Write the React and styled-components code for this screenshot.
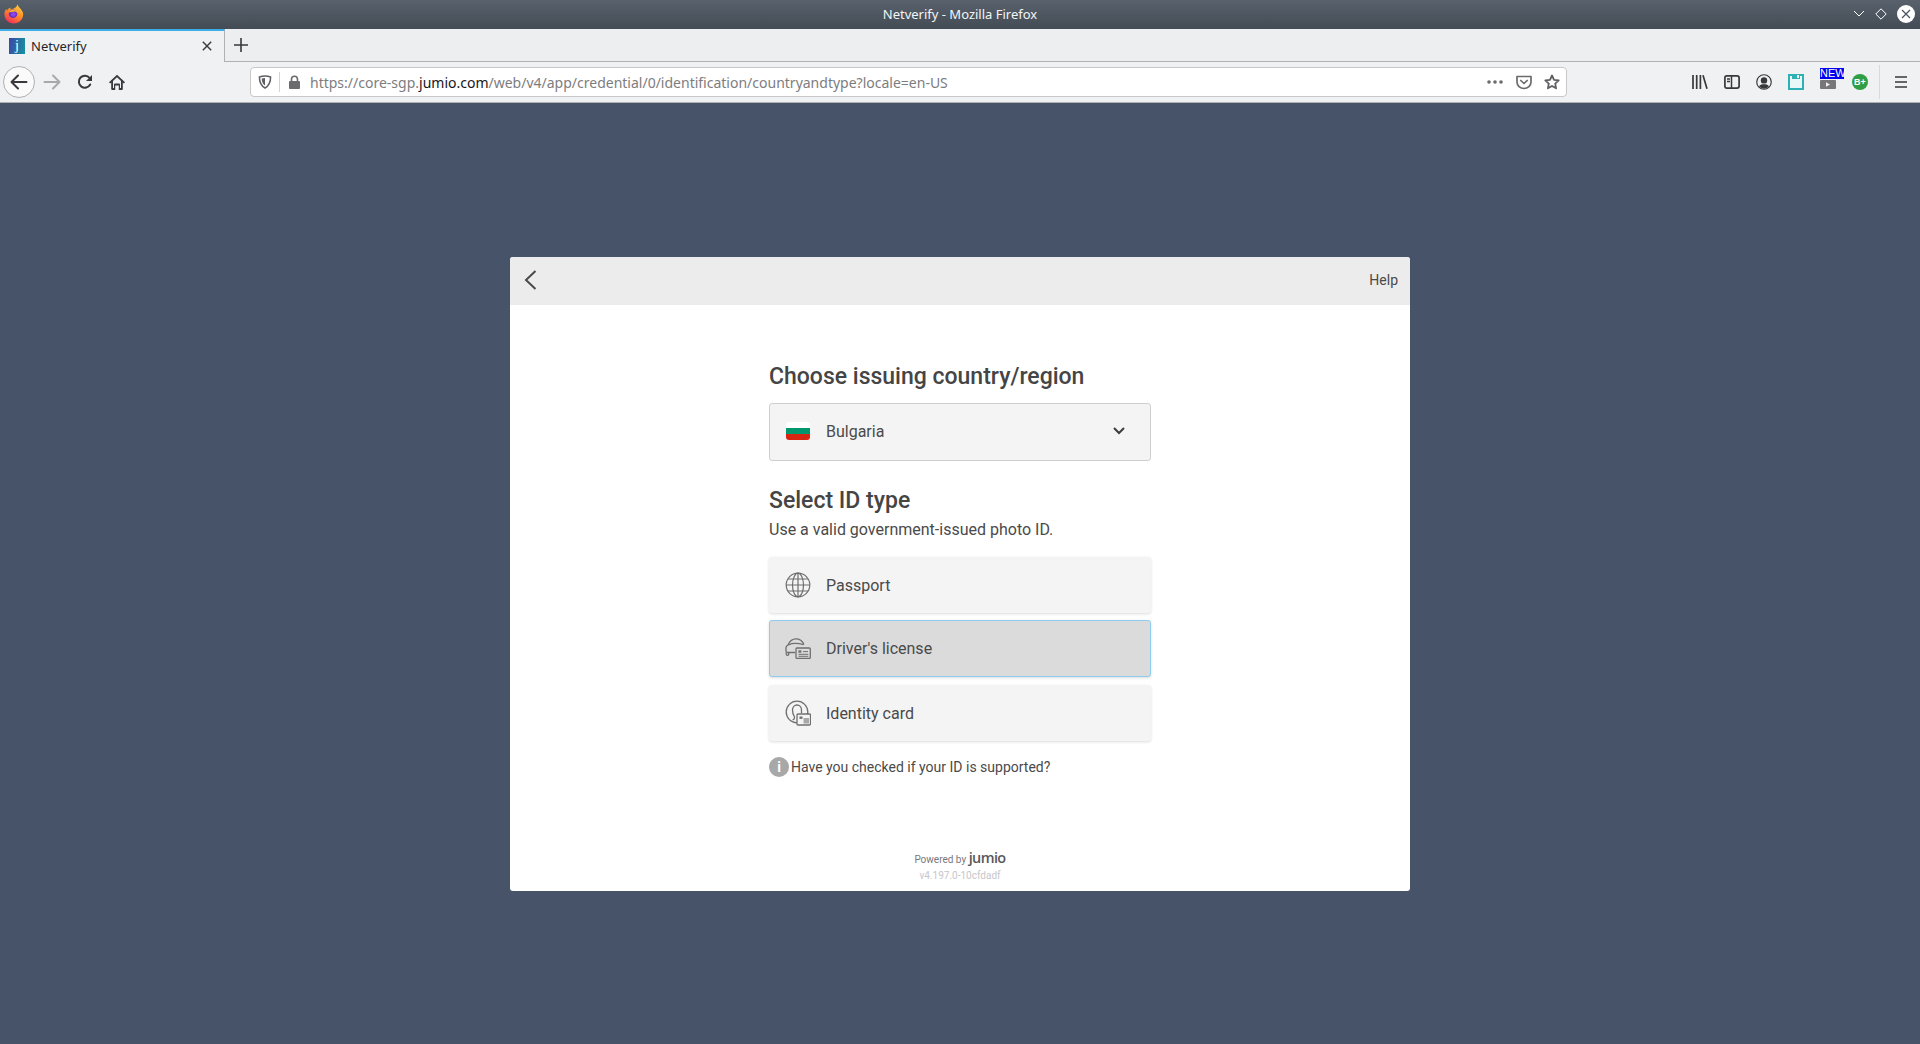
import React from "react";
import styled, { createGlobalStyle } from "styled-components";

const GlobalStyle = createGlobalStyle`
  html, body { margin: 0; padding: 0; height: 100%; }
  body { background: #475369; font-family: "Roboto", "Liberation Sans", sans-serif; overflow: hidden; }
`;

function FirefoxLogo() {
  return (
    <svg width="20" height="20" viewBox="0 0 20 20">
      <defs>
        <linearGradient id="ff" x1="0.8" y1="0" x2="0.25" y2="1">
          <stop offset="0" stopColor="#ffd43a" />
          <stop offset="0.5" stopColor="#ff8a26" />
          <stop offset="1" stopColor="#f5275f" />
        </linearGradient>
      </defs>
      <path d="M13.500 0c.2 2 1.500 3 3 4.800 1.600 2 2.700 3.600 2.700 5.400 0 5-4.200 9.300-9.400 9.300C4.700 19.500.4 15.500.4 10.200c0-2 .7-4 1.900-5.500 0 1 .3 1.600.8 2 .6-1.600 1.800-2.800 3.500-3.200-.4.800-.4 1.400-.1 1.800C9.500 5 13 3.500 13.500 0z" fill="url(#ff)" />
      <circle cx="9" cy="9.800" r="4.300" fill="#6a2fc4" />
      <path d="M4.800 8.500c.8-2 3-3.200 5.300-2.700 2 .4 3.300 1.800 3.500 3.400-1.200-1.300-2.800-1.800-4.300-1.500-1.600.2-3.100.2-4.500.8z" fill="#ffb62c" />
      <circle cx="9.300" cy="10.300" r="2.400" fill="#8c45e8" />
    </svg>
  );
}

function BackArrow() {
  return (
    <svg width="18" height="16" viewBox="0 0 18 16" fill="none" stroke="#38383d" strokeWidth="2" strokeLinecap="round" strokeLinejoin="round">
      <path d="M1.500 8h15M8 1.500 1.500 8 8 14.500" />
    </svg>
  );
}

function ForwardArrow() {
  return (
    <svg width="18" height="16" viewBox="0 0 18 16" fill="none" stroke="#a9a9ab" strokeWidth="2" strokeLinecap="round" strokeLinejoin="round">
      <path d="M16.500 8h-15M10 1.500 16.500 8 10 14.500" />
    </svg>
  );
}

function Reload() {
  return (
    <svg width="16" height="16" viewBox="0 0 16 16" fill="none">
      <path d="M13.200 10.500A6 6 0 1 1 12.600 4" stroke="#38383d" strokeWidth="2" strokeLinecap="round" />
      <path d="M15 1v6H9z" fill="#38383d" />
    </svg>
  );
}

function Home() {
  return (
    <svg width="16" height="16" viewBox="0 0 16 16">
      <path d="M8 .800 0 8.300l1.200 1.200 1-.9V15a1 1 0 0 0 1 1h3v-4.500h3.600V16h3a1 1 0 0 0 1-1V8.600l1 .9L16 8.300z" fill="#38383d" />
      <path d="M8 3.200 4 6.900V14h1V10.500a1 1 0 0 1 1-1h4a1 1 0 0 1 1 1V14h1V6.900z" fill="#f0f0f4" />
    </svg>
  );
}

function Shield() {
  return (
    <svg width="14" height="14" viewBox="0 0 14 14" fill="none">
      <path d="M7 1c2 0 4 .4 5.600 1 0 4.500-1 8.500-5.600 11C2.400 10.500 1.400 6.500 1.400 2 3 1.400 5 1 7 1z" stroke="#5f5f63" strokeWidth="1.500" />
      <path d="M7 3v7.500C4.600 9 3.800 6.600 3.700 3.500 4.800 3.200 6 3 7 3z" fill="#5f5f63" />
    </svg>
  );
}

function Lock() {
  return (
    <svg width="13" height="14" viewBox="0 0 13 14" fill="none">
      <path d="M3.500 6V4.200a3 3 0 0 1 6 0V6" stroke="#6b6b6e" strokeWidth="1.600" />
      <rect x="1" y="6" width="11" height="8" rx="1" fill="#6b6b6e" />
    </svg>
  );
}

function DotsIcon() {
  return (
    <svg width="16" height="4" viewBox="0 0 16 4" fill="#6b6b6e">
      <circle cx="2" cy="2" r="1.800" />
      <circle cx="8" cy="2" r="1.800" />
      <circle cx="14" cy="2" r="1.800" />
    </svg>
  );
}

function Pocket() {
  return (
    <svg width="16" height="15" viewBox="0 0 16 15" fill="none" stroke="#6b6b6e" strokeWidth="1.700">
      <path d="M1 1.500h14v5.500c0 3.600-3.200 6.500-7 6.500S1 10.600 1 7z" strokeLinejoin="round" />
      <path d="M4.800 5.500 8 8.500l3.200-3" strokeLinecap="round" strokeLinejoin="round" />
    </svg>
  );
}

function Star() {
  return (
    <svg width="16" height="16" viewBox="0 0 16 16" fill="none">
      <path d="m8 1.500 2 4.300 4.700.6-3.500 3.200.9 4.700L8 12l-4.100 2.300.9-4.700L1.300 6.400 6 5.800z" stroke="#5f5f63" strokeWidth="1.800" strokeLinejoin="round" />
    </svg>
  );
}

function Library() {
  return (
    <svg width="16" height="14" viewBox="0 0 16 14" fill="none" stroke="#38383d" strokeWidth="1.700">
      <path d="M1 0v14M4.700 0v14M8.400 0v14M11 .3l4 13.500" />
    </svg>
  );
}

function Sidebar() {
  return (
    <svg width="16" height="14" viewBox="0 0 16 14" fill="none">
      <rect x=".9" y=".9" width="14.200" height="12.200" rx="2" stroke="#38383d" strokeWidth="1.700" />
      <path d="M7.500 1v12" stroke="#38383d" strokeWidth="1.500" />
      <path d="M3 4h3M3 6.500h3" stroke="#38383d" strokeWidth="1.300" />
    </svg>
  );
}

function Account() {
  return (
    <svg width="16" height="16" viewBox="0 0 15 15" fill="none">
      <circle cx="7.500" cy="7.500" r="6.800" stroke="#38383d" strokeWidth="1.100" />
      <circle cx="7.500" cy="6" r="3" fill="#38383d" />
      <path d="M2.800 11.500C4 10 5.700 9.700 7.500 9.700s3.500.3 4.700 1.800A6 6 0 0 1 7.500 13.800a6 6 0 0 1-4.700-2.300z" fill="#38383d" />
    </svg>
  );
}

function Floppy() {
  return (
    <svg width="16" height="16" viewBox="0 0 16 16">
      <path d="M0 0h16v16H0z" fill="#2fb0b5" />
      <path d="M2 2h12v12H2z" fill="#e8f7f8" />
      <path d="M4 0h8v5H4z" fill="#2fb0b5" />
      <path d="M9 1h2v3H9z" fill="#e8f7f8" />
    </svg>
  );
}

function VideoExt() {
  return (
    <svg width="16" height="9" viewBox="0 0 16 9">
      <rect width="16" height="9" rx="1" fill="#77777a" />
      <path d="M6 2.200 10 4.500 6 6.800z" fill="#f0f0f4" />
    </svg>
  );
}

function MenuBars() {
  return (
    <svg width="12" height="12" viewBox="0 0 12 12" stroke="#38383d" strokeWidth="1.600">
      <path d="M0 1h12M0 6h12M0 11h12" />
    </svg>
  );
}

function GlobeIcon() {
  return (
    <svg width="26" height="26" viewBox="0 0 26 26" fill="none" stroke="#6f6f6f" strokeWidth="1.200">
      <circle cx="13" cy="13" r="11.800" />
      <ellipse cx="13" cy="13" rx="5.500" ry="11.800" />
      <path d="M13 1.200v23.600M1.200 13h23.600M3 7h20M3 19h20" />
    </svg>
  );
}

function CarIcon() {
  return (
    <svg width="26" height="21" viewBox="0 0 26 21" fill="none" stroke="#6f6f6f" strokeWidth="1.300">
      <path d="M10 14.500H2.600a1.600 1.600 0 0 1-1.600-1.600V9.800c0-1.300.8-2.400 2.100-3C4.600 3.300 7 .9 11 .9c3.800 0 6.300 2 8 5.600" />
      <path d="M3.400 6.800c3.400-1.500 10-1.500 15.200-.2" />
      <path d="M1.200 14.500v1.600a1.300 1.300 0 0 0 2.600 0v-1.600" />
      <rect x="11" y="10" width="14.300" height="10.400" rx="1" fill="#dbdbdb" />
      <rect x="13.400" y="12.300" width="3" height="2.400" fill="#6f6f6f" stroke="none" />
      <path d="M18 13.600h5M13.500 16.300h9.800M13.500 18.300h9.800" strokeWidth="1" />
    </svg>
  );
}

function PersonIcon() {
  return (
    <svg width="26" height="26" viewBox="0 0 26 26" fill="none" stroke="#6f6f6f" strokeWidth="1.300">
      <circle cx="12" cy="12" r="10.800" />
      <path d="M7.500 20c1.500-.5 2.500-1.500 1.800-3.500C8 14.500 7.500 12.500 7.500 10c0-3 2-5 4.500-5s4.500 2 4.500 5v3" />
      <rect x="12" y="14" width="13.500" height="11" rx="1" fill="#f4f4f4" />
      <rect x="14.500" y="16.500" width="3" height="2.400" fill="#6f6f6f" stroke="none" />
      <rect x="18.500" y="18" width="5.500" height="5.500" fill="#a8a8a8" stroke="none" />
    </svg>
  );
}

function FlagBg() {
  return (
    <Flag>
      <FlagBand $color="#ffffff" />
      <FlagBand $color="#00966e" />
      <FlagBand $color="#d62612" />
    </Flag>
  );
}

export default function App() {
  return (
    <>
      <GlobalStyle />
      <Browser>
        <TitleBar>
          <LogoSlot><FirefoxLogo /></LogoSlot>
          <WindowTitle>Netverify - Mozilla Firefox</WindowTitle>
          <WindowButtons>
            <svg width="12" height="8" viewBox="0 0 12 8" fill="none" stroke="#fff" strokeWidth="1"><path d="m1 1 5 5 5-5" /></svg>
            <svg width="12" height="12" viewBox="0 0 12 12" fill="none" stroke="#fff" strokeWidth="1"><path d="M6 .8 11.200 6 6 11.200.8 6z" /></svg>
            <CloseCircle>
              <svg width="10" height="10" viewBox="0 0 10 10" stroke="#4a525c" strokeWidth="1.200"><path d="m1 1 8 8M9 1 1 9" /></svg>
            </CloseCircle>
          </WindowButtons>
        </TitleBar>

        <TabBar>
          <Tab>
            <Favicon>j</Favicon>
            <TabLabel>Netverify</TabLabel>
            <svg width="10" height="10" viewBox="0 0 10 10" stroke="#38383d" strokeWidth="1.400"><path d="m.8.800 8.400 8.400M9.200.800.800 9.200" /></svg>
          </Tab>
          <NewTab>
            <svg width="14" height="14" viewBox="0 0 14 14" stroke="#38383d" strokeWidth="1.600"><path d="M7 0v14M0 7h14" /></svg>
          </NewTab>
        </TabBar>

        <Toolbar>
          <BackCircle><BackArrow /></BackCircle>
          <NavButton $left={1}><ForwardArrow /></NavButton>
          <NavButton $left={1}><Reload /></NavButton>
          <NavButton $left={0}><Home /></NavButton>
          <UrlBar>
            <UrlIcon><Shield /></UrlIcon>
            <UrlDivider />
            <LockSlot><Lock /></LockSlot>
            <UrlText>https://core-sgp.<strong>jumio.com</strong>/web/v4/app/credential/0/identification/countryandtype?locale=en-US</UrlText>
            <DotsIcon />
            <PocketSlot><Pocket /></PocketSlot>
            <StarSlot><Star /></StarSlot>
          </UrlBar>
          <ToolIcons>
            <ToolIcon><Library /></ToolIcon>
            <ToolIcon><Sidebar /></ToolIcon>
            <ToolIcon><Account /></ToolIcon>
            <ToolIcon><Floppy /></ToolIcon>
            <VideoTool>
              <VideoExt />
              <NewBadge>NEW</NewBadge>
            </VideoTool>
            <ToolIcon><GreenBadge>B+</GreenBadge></ToolIcon>
          </ToolIcons>
          <ToolDivider />
          <MenuSlot><MenuBars /></MenuSlot>
        </Toolbar>

        <Page>
          <Card>
            <CardHeader>
              <svg width="13" height="20" viewBox="0 0 13 20" fill="none" stroke="#4a4a4a" strokeWidth="2"><path d="M11.500 1 2 10l9.500 9" /></svg>
              <HelpLink>Help</HelpLink>
            </CardHeader>
            <CardBody>
              <Column>
                <Heading>Choose issuing country/region</Heading>
                <Select>
                  <FlagBg />
                  <OptionLabel>Bulgaria</OptionLabel>
                  <Chevron>
                    <svg width="12" height="8" viewBox="0 0 12 8" fill="none" stroke="#3c3c3c" strokeWidth="2"><path d="m1 1 5 5 5-5" /></svg>
                  </Chevron>
                </Select>
                <SubHeading>Select ID type</SubHeading>
                <Hint>Use a valid government-issued photo ID.</Hint>
                <IdOption $top={18} $height={56}>
                  <IconSlot><GlobeIcon /></IconSlot>
                  <OptionLabel>Passport</OptionLabel>
                </IdOption>
                <IdOption $top={7} $height={57} $active>
                  <IconSlot><CarIcon /></IconSlot>
                  <OptionLabel>Driver's license</OptionLabel>
                </IdOption>
                <IdOption $top={8} $height={56}>
                  <IconSlot><PersonIcon /></IconSlot>
                  <OptionLabel>Identity card</OptionLabel>
                </IdOption>
                <SupportRow>
                  <InfoDot>i</InfoDot>
                  <span>Have you checked if your ID is supported?</span>
                </SupportRow>
              </Column>
              <Footer>
                <PoweredLine>Powered by <Brand>jumio</Brand></PoweredLine>
                <Version>v4.197.0-10cfdadf</Version>
              </Footer>
            </CardBody>
          </Card>
        </Page>
      </Browser>
    </>
  );
}

//styles

const Browser = styled.div`
  display: flex;
  flex-direction: column;
  height: 1044px;
  width: 1920px;
`;

const TitleBar = styled.div`
  position: relative;
  height: 29px;
  display: flex;
  align-items: center;
  justify-content: center;
  background: linear-gradient(#59626c, #434b55);
`;

const LogoSlot = styled.div`
  position: absolute;
  left: 4px;
  top: 4px;
  display: flex;
`;

const WindowTitle = styled.div`
  color: #f2f4f5;
  font: 13px "Noto Sans", sans-serif;
  margin-bottom: 1px;
`;

const WindowButtons = styled.div`
  position: absolute;
  right: 5px;
  top: 5px;
  display: flex;
  align-items: center;
  gap: 10px;
`;

const CloseCircle = styled.div`
  width: 18px;
  height: 18px;
  border-radius: 50%;
  background: #fff;
  display: flex;
  align-items: center;
  justify-content: center;
`;

const TabBar = styled.div`
  height: 33px;
  display: flex;
  background: #edeef0;
  border-bottom: 1px solid #b1b1b3;
  box-sizing: border-box;
`;

const Tab = styled.div`
  width: 225px;
  height: 33px;
  box-sizing: border-box;
  display: flex;
  align-items: center;
  padding: 0 12px 2px 9px;
  background: #f0f1f3;
  border-top: 2px solid #3daee9;
  border-right: 1px solid #b1b1b3;
  position: relative;
  z-index: 1;
`;

const Favicon = styled.div`
  width: 16px;
  height: 16px;
  background: linear-gradient(100deg, #3c46a8, #1593a0);
  color: #fff;
  font: 14px/16px "Liberation Serif", serif;
  text-align: center;
`;

const TabLabel = styled.div`
  flex: 1;
  margin-left: 6px;
  font: 13px "Noto Sans", sans-serif;
  color: #26262a;
`;

const NewTab = styled.div`
  width: 32px;
  display: flex;
  align-items: center;
  justify-content: center;
`;

const Toolbar = styled.div`
  height: 41px;
  box-sizing: border-box;
  display: flex;
  align-items: center;
  padding-left: 3px;
  background: #f0f1f3;
  border-bottom: 1px solid #b1b1b3;
`;

const BackCircle = styled.div`
  width: 32px;
  height: 32px;
  border-radius: 50%;
  border: 1px solid #b1b1b3;
  background: #fafafb;
  box-sizing: border-box;
  display: flex;
  align-items: center;
  justify-content: center;
`;

const NavButton = styled.div`
  width: 32px;
  height: 32px;
  margin-left: ${(p) => p.$left}px;
  display: flex;
  align-items: center;
  justify-content: center;
`;

const UrlBar = styled.div`
  width: 1317px;
  height: 30px;
  margin-left: 117px;
  box-sizing: border-box;
  display: flex;
  align-items: center;
  background: #fff;
  border: 1px solid #c8c8ca;
  border-radius: 4px;
`;

const UrlIcon = styled.div`
  width: 28px;
  display: flex;
  justify-content: center;
`;

const UrlDivider = styled.div`
  width: 1px;
  height: 20px;
  background: #d4d4d6;
`;

const LockSlot = styled.div`
  display: flex;
  margin-left: 8px;
`;

const UrlText = styled.div`
  flex: 1;
  margin-left: 9px;
  font: 14px "Noto Sans", sans-serif;
  color: #7d7d80;
  white-space: nowrap;
  strong {
    font-weight: 400;
    color: #16161a;
  }
`;

const PocketSlot = styled.div`
  display: flex;
  margin-left: 13px;
`;

const StarSlot = styled.div`
  display: flex;
  margin: 0 6px 0 12px;
`;

const ToolIcons = styled.div`
  display: flex;
  margin-left: 117px;
`;

const ToolIcon = styled.div`
  position: relative;
  width: 32px;
  height: 32px;
  display: flex;
  align-items: center;
  justify-content: center;
`;

const VideoTool = styled(ToolIcon)`
  padding-top: 4px;
  box-sizing: border-box;
`;

const NewBadge = styled.div`
  position: absolute;
  top: 2px;
  left: 8px;
  width: 24px;
  height: 11px;
  background: #0000f0;
  color: #fff;
  font: 11px/11px "Liberation Sans", sans-serif;
  text-align: center;
`;

const GreenBadge = styled.div`
  width: 16px;
  height: 16px;
  border-radius: 50%;
  background: #2f9e44;
  color: #fff;
  font: bold 9px/16px "Liberation Sans", sans-serif;
  text-align: center;
`;

const ToolDivider = styled.div`
  width: 1px;
  height: 34px;
  margin-left: 3px;
  background: #d9d9db;
`;

const MenuSlot = styled.div`
  display: flex;
  margin-left: 15px;
`;

const Page = styled.div`
  flex: 1;
  background: #475369;
  display: flex;
  justify-content: center;
  padding-top: 154px;
`;

const Card = styled.div`
  width: 900px;
  height: 634px;
  background: #fff;
  border-radius: 3px;
  overflow: hidden;
  display: flex;
  flex-direction: column;
`;

const CardHeader = styled.div`
  height: 48px;
  box-sizing: border-box;
  flex: none;
  background: #ececec;
  display: flex;
  align-items: center;
  justify-content: space-between;
  padding: 0 12px 2px 14px;
`;

const HelpLink = styled.div`
  font-size: 14px;
  color: #4a4a4a;
`;

const CardBody = styled.div`
  flex: 1;
  display: flex;
  flex-direction: column;
  align-items: center;
  padding-top: 58px;
`;

const Column = styled.div`
  width: 382px;
  flex: 1;
  display: flex;
  flex-direction: column;
`;

const Heading = styled.div`
  font-size: 23px;
  line-height: 28px;
  font-weight: 500;
  color: #454545;
`;

const Select = styled.div`
  height: 58px;
  margin-top: 12px;
  box-sizing: border-box;
  display: flex;
  align-items: center;
  background: #f4f4f4;
  border: 1px solid #cfcfcf;
  border-radius: 3px;
  padding: 0 0 2px 16px;
`;

const Flag = styled.div`
  width: 24px;
  height: 18px;
  border-radius: 3px;
  overflow: hidden;
  display: flex;
  flex-direction: column;
  margin-right: 16px;
`;

const FlagBand = styled.div`
  flex: 1;
  background: ${(p) => p.$color};
`;

const Chevron = styled.div`
  margin-left: auto;
  margin-right: 25px;
  display: flex;
`;

const OptionLabel = styled.div`
  font-size: 16px;
  color: #4a4a4a;
`;

const SubHeading = styled.div`
  margin-top: 26px;
  font-size: 23px;
  line-height: 28px;
  font-weight: 500;
  color: #454545;
`;

const Hint = styled.div`
  margin-top: 5px;
  font-size: 16px;
  line-height: 19px;
  color: #4a4a4a;
`;

const IdOption = styled.div`
  height: ${(p) => p.$height}px;
  margin-top: ${(p) => p.$top}px;
  box-sizing: border-box;
  display: flex;
  align-items: center;
  padding-left: 15px;
  border-radius: 3px;
  background: ${(p) => (p.$active ? "#dbdbdb" : "#f4f4f4")};
  border: 1px solid ${(p) => (p.$active ? "#8fcdf0" : "#f4f4f4")};
  box-shadow: 0 1px 3px rgba(0, 0, 0, 0.14);
`;

const IconSlot = styled.div`
  width: 26px;
  display: flex;
  justify-content: center;
  margin-right: 15px;
`;

const SupportRow = styled.div`
  display: flex;
  align-items: center;
  gap: 2px;
  margin-top: 16px;
  font-size: 14px;
  color: #4a4a4a;
`;

const InfoDot = styled.div`
  width: 20px;
  height: 20px;
  border-radius: 50%;
  background: #a8a8a8;
  color: #fff;
  font: bold 14px/20px "Roboto", sans-serif;
  text-align: center;
`;

const Footer = styled.div`
  text-align: center;
  padding-bottom: 8px;
`;

const PoweredLine = styled.div`
  font-size: 10px;
  line-height: 16px;
  color: #77777c;
`;

const Brand = styled.span`
  font: 600 14.500px/16px "Open Sans", sans-serif;
  letter-spacing: -0.6px;
  color: #58585c;
`;

const Version = styled.div`
  font-size: 10px;
  line-height: 15px;
  color: #c6c6ca;
`;
